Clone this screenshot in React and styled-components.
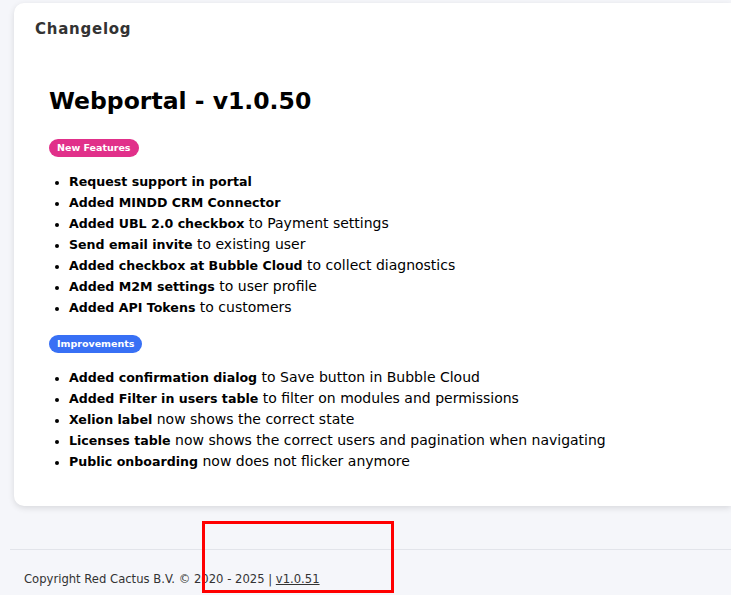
import styled, { createGlobalStyle } from "styled-components";

const GlobalStyle = createGlobalStyle`
  * {
    box-sizing: border-box;
  }
  body {
    margin: 0;
    background-color: #f5f6fa;
    font-family: "DejaVu Sans", "Noto Sans", sans-serif;
    color: #000;
  }
`;

const Page = styled.div`
  position: relative;
  width: 731px;
  height: 595px;
  overflow: hidden;
  padding: 3px 0 0 14px;
`;

const Card = styled.div`
  background-color: #fff;
  border-radius: 10px 0 0 10px;
  box-shadow: 0 2px 6px rgba(0, 0, 0, 0.12);
  height: 503px;
  padding: 16px 0 0 21px;
`;

const CardTitle = styled.h2`
  margin: 0;
  font-size: 15px;
  font-weight: 700;
  color: #333;
  letter-spacing: 0.75px;
  line-height: 20px;
`;

const Release = styled.div`
  padding: 46px 0 0 14px;
`;

const Version = styled.h1`
  margin: 0;
  font-size: 23.5px;
  font-weight: 700;
  line-height: 32px;
`;

const Pill = styled.span`
  display: inline-block;
  height: 18px;
  line-height: 18px;
  padding: 0 8px;
  border-radius: 9px;
  font-size: 9.5px;
  font-weight: 700;
  color: #fff;
  background-color: ${(p) => p.$color};
  margin-top: ${(p) => p.$top}px;
`;

const List = styled.ul`
  margin: 14px 0 0 0;
  padding-left: 20px;
  font-size: 14px;
  line-height: 21px;

  li::marker {
    font-size: 12px;
  }
  b {
    font-size: 12.6px;
    font-weight: 700;
  }
`;

const Footer = styled.footer`
  margin: 43px 0 0 -4px;
  border-top: 1px solid #e2e4ea;
  padding: 22px 0 0 14px;
  font-size: 11.6px;
  color: #333;
  a {
    color: #333;
    text-decoration: underline;
  }
`;

const Marker = styled.div`
  position: absolute;
  left: 202px;
  top: 521px;
  width: 192px;
  height: 72px;
  border: 3px solid #ff0000;
`;

const newFeatures = [
  ["Request support in portal", ""],
  ["Added MINDD CRM Connector", ""],
  ["Added UBL 2.0 checkbox", " to Payment settings"],
  ["Send email invite", " to existing user"],
  ["Added checkbox at Bubble Cloud", " to collect diagnostics"],
  ["Added M2M settings", " to user profile"],
  ["Added API Tokens", " to customers"],
];

const improvements = [
  ["Added confirmation dialog", " to Save button in Bubble Cloud"],
  ["Added Filter in users table", " to filter on modules and permissions"],
  ["Xelion label", " now shows the correct state"],
  ["Licenses table", " now shows the correct users and pagination when navigating"],
  ["Public onboarding", " now does not flicker anymore"],
];

function App() {
  return (
    <>
      <GlobalStyle />
      <Page>
        <Card>
          <CardTitle>Changelog</CardTitle>
          <Release>
            <Version>Webportal - v1.0.50</Version>
            <Pill $color="#e1308a" $top={22}>New Features</Pill>
            <List>
              {newFeatures.map(([bold, rest]) => (
                <li key={bold}>
                  <b>{bold}</b>
                  {rest}
                </li>
              ))}
            </List>
            <Pill $color="#3870f5" $top={17}>Improvements</Pill>
            <List>
              {improvements.map(([bold, rest]) => (
                <li key={bold}>
                  <b>{bold}</b>
                  {rest}
                </li>
              ))}
            </List>
          </Release>
        </Card>
        <Footer>
          Copyright Red Cactus B.V. © 2020 - 2025 | <a>v1.0.51</a>
        </Footer>
        <Marker />
      </Page>
    </>
  );
}

export default App;
